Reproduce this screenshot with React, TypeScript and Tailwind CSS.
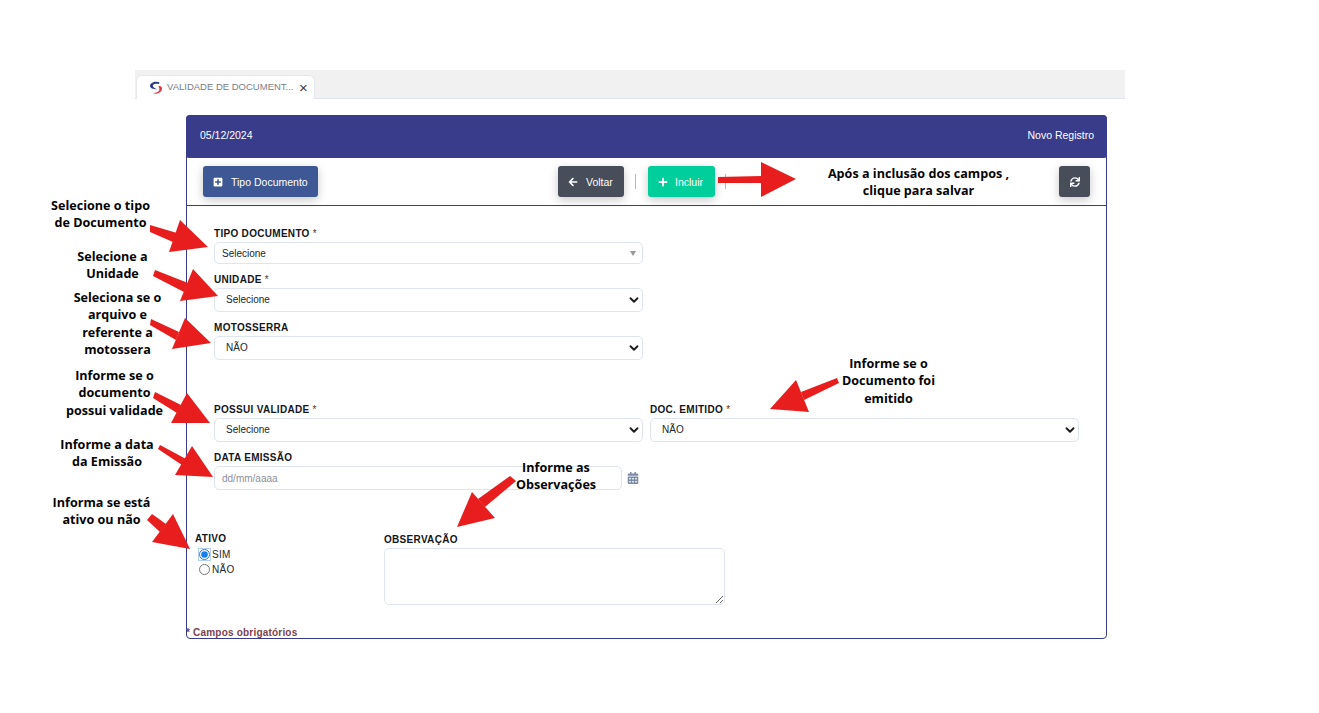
import { ReactNode } from "react"
import { FaArrowLeft, FaCalendarAlt, FaPlus, FaPlusSquare, FaSync } from "react-icons/fa"
import { ChevronDown } from "lucide-react"

const notes = [
  { cx: 100.5, top: 197, lines: ["Selecione o tipo", "de Documento"] },
  { cx: 112.5, top: 248, lines: ["Selecione a", "Unidade"] },
  { cx: 117.5, top: 289, lines: ["Seleciona se o", "arquivo e", "referente a", "motossera"] },
  { cx: 114.5, top: 367, lines: ["Informe se o", "documento", "possui validade"] },
  { cx: 107, top: 436, lines: ["Informe a data", "da Emissão"] },
  { cx: 101.5, top: 494, lines: ["Informa se está", "ativo ou não"] },
  { cx: 556, top: 459, lines: ["Informe as", "Observações"] },
  { cx: 888.5, top: 355, lines: ["Informe se o", "Documento foi", "emitido"] },
  { cx: 918.5, top: 165, lines: ["Após a inclusão dos campos ,", "clique para salvar"] },
]

const arrows = [
  ["150,225 177,233 173,242 150,232", "180,220 208,247 169,252"],
  ["155,270 188,283 184,292 153,276", "193,269 218,296 180,301"],
  ["151,319 179,332 176,340 150,325", "185,318 211,343 172,349"],
  ["155,392 181,405 177,413 153,398", "187,393 210,423 171,423"],
  ["160,445 186,459 182,465 158,449", "192,446 213,477 175,475"],
  ["152,514 166,524 160,532 147,520", "173,514 190,549 152,542"],
  ["510,476 516,481 485,507 478,499", "472,492 457,527 495,518"],
  ["837,378 839,383 804,400 801,392", "796,380 770,409 809,412"],
  ["718,177 761,176 761,183 718,183", "761,162 796,179 761,197"],
]

const Label = ({ children, req }: { children: ReactNode; req?: boolean }) => (
  <label className="block h-[13px] mb-[2px] text-[10px] leading-[13px] font-bold tracking-[0.3px] text-[#14161c]">
    {children}
    {req && <span className="font-normal text-[#5c3030]"> *</span>}
  </label>
)

const Select = ({ value }: { value: string }) => (
  <div className="relative h-6 flex items-center pl-[11px] pb-[1px] border border-[#dfe5ef] rounded-[5px] bg-white text-[10px] text-[#23262b]">
    {value}
    <ChevronDown size={14} strokeWidth={3.2} className="absolute right-[1px] top-[4px] text-[#1c1c1c]" />
  </div>
)

const Btn = ({ className, children }: { className: string; children: ReactNode }) => (
  <button className={`h-[31px] flex items-center rounded-[3px] text-white text-[10.5px] shadow-[0_3px_10px_rgba(0,0,0,0.22)] ${className}`}>
    {children}
  </button>
)

const App = () => {
  return (
    <div className="relative w-full h-[713px] overflow-hidden bg-white pt-[70px] font-['Liberation_Sans',sans-serif]">
      <div className="ml-[135px] w-[990px] h-[29px] flex items-end bg-[#f1f1f1] border-b border-[#e1e4e8]">
        <div className="ml-[1px] w-[179px] h-6 flex items-center pl-[12px] bg-white rounded-t-[6px] border-t border-x border-[#e6e8ec] -mb-[1px]">
          <svg width="14" height="14" viewBox="0 0 14 14" className="shrink-0">
            <path d="M10.5 1.2 C6 -0.4 1.2 1.6 1 4.6 C0.9 7 4 8.2 8 8.4 C6 7 3.6 6.4 3.8 4.6 C4 3 7.4 2.4 10 3 Z" fill="#2b3a86" />
            <path d="M9.5 4.8 C13 5 13.6 7.4 12.6 9.4 C11.4 12 7 13.4 4 12.2 C7 12 10 11 10.4 8.8 C10.6 7.4 9.8 6 9.5 4.8 Z" fill="#e2343f" />
          </svg>
          <span className="ml-[4px] w-[127px] whitespace-nowrap text-[9.5px] text-[#7b7f86]">VALIDADE DE DOCUMENT...</span>
          <span className="ml-[5px] text-[15px] leading-none text-[#3a3d45]">×</span>
        </div>
      </div>

      <div className="ml-[186px] mt-4 w-[921px] h-[524px] flex flex-col border border-[#393c8b] rounded-[4px]">
        <div className="-mx-[1px] -mt-[1px] h-[43px] flex items-center justify-between pl-[14px] pr-[13px] pb-[1px] bg-[#393c8b] rounded-t-[4px] rounded-b-[3px] text-white text-[10.5px] font-medium">
          <span>05/12/2024</span>
          <span>Novo Registro</span>
        </div>

        <div className="h-[48px] shrink-0 flex items-center pl-4 pr-4 border-b border-[#393c8b]">
          <Btn className="w-[115px] pl-[10px] bg-[#3d5894]">
            <FaPlusSquare size={10} />
            <span className="ml-2 pt-[2px]">Tipo Documento</span>
          </Btn>
          <div className="ml-[240px] flex items-center">
            <Btn className="w-[66px] pl-[10px] bg-[#474e59]">
              <FaArrowLeft size={10} />
              <span className="ml-2 pt-[2px]">Voltar</span>
            </Btn>
            <div className="ml-[11px] mr-[12px] w-[1px] h-[15px] bg-[#b5b8bd]" />
            <Btn className="w-[67px] pl-[10px] bg-[#00cf9c]">
              <FaPlus size={10} />
              <span className="ml-[7px] pt-[2px]">Incluir</span>
            </Btn>
            <div className="ml-[10px] w-[1px] h-[15px] bg-[#b5b8bd]" />
          </div>
          <Btn className="ml-auto w-[31px] justify-center bg-[#474e59]">
            <FaSync size={10} />
          </Btn>
        </div>

        <div className="pl-[27px] pt-[21px]">
          <div className="w-[429px]">
            <Label req>TIPO DOCUMENTO</Label>
            <div className="relative h-[22px] flex items-center pl-[7px] border border-[#dfe5ef] rounded-[5px] text-[10px] text-[#23262b]">
              Selecione
              <span className="absolute right-[6px] top-[8px] border-x-[3px] border-x-transparent border-t-[5px] border-t-[#999]" />
            </div>
          </div>
          <div className="w-[429px] mt-[9px]">
            <Label req>UNIDADE</Label>
            <Select value="Selecione" />
          </div>
          <div className="w-[429px] mt-[9px]">
            <Label>MOTOSSERRA</Label>
            <Select value="NÃO" />
          </div>

          <div className="mt-[43px] grid grid-cols-[429px_429px] gap-x-[7px]">
            <div>
              <Label req>POSSUI VALIDADE</Label>
              <Select value="Selecione" />
            </div>
            <div>
              <Label req>DOC. EMITIDO</Label>
              <Select value="NÃO" />
            </div>
          </div>

          <div className="mt-[9px]">
            <Label>DATA EMISSÃO</Label>
            <div className="flex items-center">
              <div className="w-[408px] h-6 flex items-center pl-[7px] border border-[#dfe5ef] rounded-[5px] text-[10px] text-[#8b9099]">
                dd/mm/aaaa
              </div>
              <FaCalendarAlt size={12} className="ml-[5px] -mt-[1px] text-[#7d8ba5]" />
            </div>
          </div>

          <div className="-ml-[19px] mt-[42px] flex">
            <div className="w-[189px]">
              <Label>ATIVO</Label>
              <label className="mt-[1px] ml-[4px] flex items-center h-[15px] text-[10px] tracking-[0.3px] text-[#23262b]">
                <input type="radio" name="ativo" defaultChecked className="w-[11px] h-[11px] m-0 mr-[2px] accent-[#1a7fe8] shadow-[0_0_0_1px_rgba(100,160,240,0.5)] rounded-full" />
                SIM
              </label>
              <label className="ml-[4px] flex items-center h-[15px] text-[10px] tracking-[0.3px] text-[#23262b]">
                <input type="radio" name="ativo" className="w-[11px] h-[11px] m-0 mr-[2px]" />
                NÃO
              </label>
            </div>
            <div className="mt-[1px]">
              <Label>OBSERVAÇÃO</Label>
              <textarea className="block w-[341px] h-[57px] border border-[#dfe5ef] rounded-[5px]" />
            </div>
          </div>
        </div>

        <div className="mt-auto -ml-[1px] text-[10px] leading-[11px] font-bold tracking-[0.2px] text-[#7c4250]">
          * Campos obrigatórios
        </div>
      </div>

      {/* setas e textos de ajuda por cima da tela */}
      <svg className="absolute inset-0 pointer-events-none" width="1319" height="713">
        {arrows.map(([shaft, head], i) => (
          <g key={i} fill="#e81e1e">
            <polygon points={shaft} />
            <polygon points={head} />
          </g>
        ))}
      </svg>
      {notes.map((n, i) => (
        <div
          key={i}
          className="absolute -translate-x-1/2 whitespace-nowrap text-center text-[12.6px] leading-[17.4px] font-bold text-[#050505] font-['Open_Sans',sans-serif]"
          style={{ left: n.cx, top: n.top }}
        >
          {n.lines.map((l) => (
            <div key={l}>{l}</div>
          ))}
        </div>
      ))}
    </div>
  )
}

export default App
